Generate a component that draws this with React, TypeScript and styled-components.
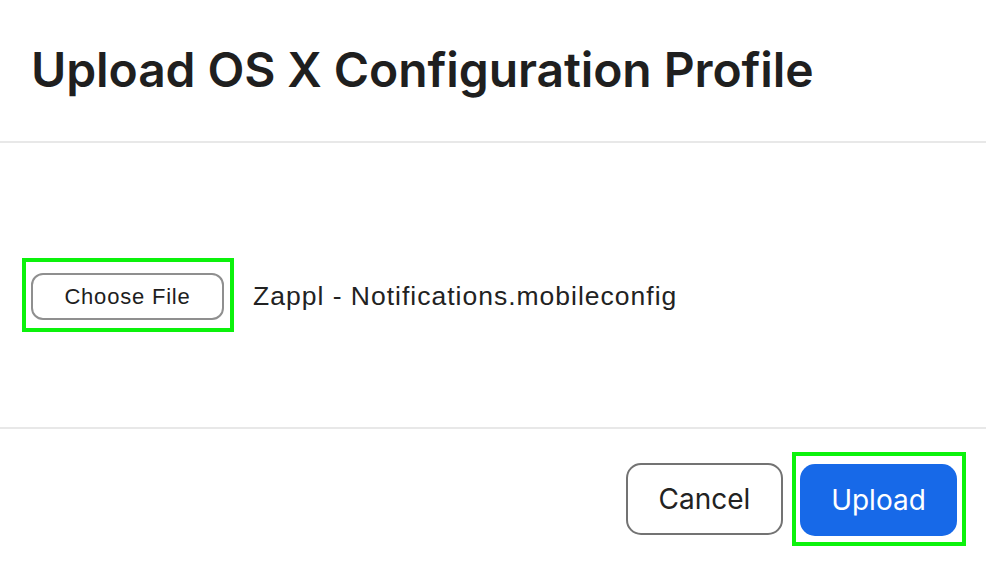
import React from "react";
import styled, { createGlobalStyle } from "styled-components";

const Global = createGlobalStyle`
  html, body { margin: 0; padding: 0; background: #ffffff; }
  body { font-family: Inter, "Liberation Sans", sans-serif; color: #222222; }
`;

const Page = styled.div`
  width: 986px;
  height: 564px;
  display: flex;
  flex-direction: column;
  background: #ffffff;
  overflow: hidden;
`;

const Header = styled.header`
  height: 143px;
  flex-shrink: 0;
  box-sizing: border-box;
  padding: 41px 0 0 31px;
  border-bottom: 2px solid #e8e8e8;
`;

const Title = styled.h1`
  margin: 0;
  font-family: Inter, sans-serif;
  font-weight: 600;
  font-size: 48px;
  line-height: 58px;
  color: #1f1f1f;
  letter-spacing: -0.1px;
`;

const Body = styled.section`
  height: 286px;
  flex-shrink: 0;
  box-sizing: border-box;
  padding: 115px 0 0 22px;
  border-bottom: 2px solid #e8e8e8;
`;

const FileRow = styled.div`
  display: flex;
  align-items: center;
  gap: 19px;
`;

const Highlight = styled.div<{ $pad: string }>`
  border: 4px solid #0cf20c;
  padding: ${(p) => p.$pad};
  display: flex;
`;

const ChooseButton = styled.button`
  width: 193px;
  height: 47px;
  box-sizing: border-box;
  border: 2px solid #8f8f8f;
  border-radius: 12px;
  background: #ffffff;
  font-family: "Liberation Sans", Arial, sans-serif;
  font-size: 22px;
  letter-spacing: 0.8px;
  color: #1e1e1e;
  padding: 0;
`;

const FileName = styled.span`
  font-family: "Liberation Sans", Arial, sans-serif;
  font-size: 26.5px;
  letter-spacing: 1px;
  color: #222222;
  padding-top: 2px;
`;

const Footer = styled.footer`
  display: flex;
  justify-content: flex-end;
  align-items: center;
  gap: 9px;
  padding: 23px 20px 0 0;
`;

const ActionButton = styled.button<{ $primary?: boolean }>`
  width: 157px;
  height: 72px;
  box-sizing: border-box;
  border-radius: 15px;
  border: ${(p) => (p.$primary ? "none" : "2px solid #737373")};
  background: ${(p) => (p.$primary ? "#1769e8" : "#ffffff")};
  color: ${(p) => (p.$primary ? "#ffffff" : "#222222")};
  font-family: Inter, sans-serif;
  font-size: 28px;
  font-weight: 400;
  padding: 0;
`;

export default function App() {
  return (
    <Page>
      <Global />
      <Header>
        <Title>Upload OS X Configuration Profile</Title>
      </Header>
      <Body>
        <FileRow>
          <Highlight $pad="11px 6px 8px 5px">
            <ChooseButton>Choose File</ChooseButton>
          </Highlight>
          <FileName>Zappl - Notifications.mobileconfig</FileName>
        </FileRow>
      </Body>
      <Footer>
        <ActionButton>Cancel</ActionButton>
        <Highlight $pad="8px 5px 6px 4px">
          <ActionButton $primary>Upload</ActionButton>
        </Highlight>
      </Footer>
    </Page>
  );
}
